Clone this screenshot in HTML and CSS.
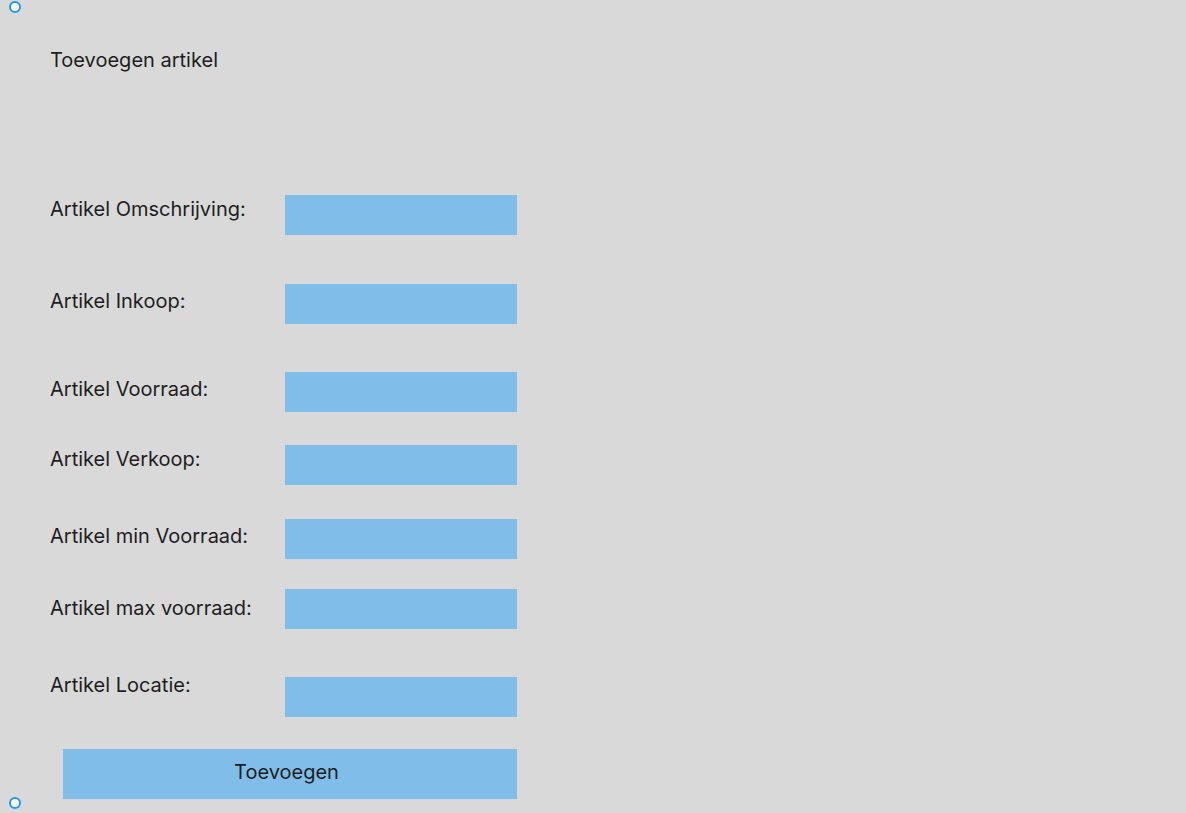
FILE: index.html
```html
<!DOCTYPE html>
<html lang="nl">
<head>
<meta charset="utf-8">
<title>Toevoegen artikel</title>
<link rel="stylesheet" href="styles.css">
</head>
<body>
<span class="handle handle-top"></span>
<span class="handle handle-bottom"></span>
<main class="page">
  <h1 class="title">Toevoegen artikel</h1>
  <form class="form">
    <div class="row r1"><label class="label">Artikel Omschrijving:</label><input class="field" type="text"></div>
    <div class="row r2"><label class="label">Artikel Inkoop:</label><input class="field" type="text"></div>
    <div class="row r3"><label class="label">Artikel Voorraad:</label><input class="field" type="text"></div>
    <div class="row r4"><label class="label">Artikel Verkoop:</label><input class="field" type="text"></div>
    <div class="row r5"><label class="label">Artikel min Voorraad:</label><input class="field" type="text"></div>
    <div class="row r6"><label class="label">Artikel max voorraad:</label><input class="field" type="text"></div>
    <div class="row r7"><label class="label">Artikel Locatie:</label><input class="field" type="text"></div>
    <button class="submit" type="button">Toevoegen</button>
  </form>
</main>
</body>
</html>
```

FILE: styles.css
```css
html, body {
  margin: 0;
  padding: 0;
  background: #d9d9d9;
  height: 100%;
  overflow: hidden;
}
body {
  font-family: Inter, "Liberation Sans", sans-serif;
  color: #1e1e1e;
  position: relative;
}
.page {
  padding: 48px 0 0 50px;
}
.title {
  margin: 0;
  font-size: 20px;
  font-weight: 400;
  line-height: 24px;
  height: 24px;
}
.form {
  display: flex;
  flex-direction: column;
  margin-top: 123px;
}
.row {
  display: flex;
  align-items: flex-start;
}
.label {
  width: 235px;
  font-size: 20px;
  line-height: 24px;
}
.field {
  width: 232px;
  height: 40px;
  box-sizing: border-box;
  border: none;
  background: #80bde9;
  margin: 0;
  padding: 0 8px;
  font: inherit;
}
.r1 .label { padding-top: 2px; }
.r2 { margin-top: 49px; }
.r2 .label { padding-top: 5px; }
.r3 { margin-top: 48px; }
.r3 .label { padding-top: 5px; }
.r4 { margin-top: 33px; }
.r4 .label { padding-top: 2px; }
.r5 { margin-top: 34px; }
.r5 .label { padding-top: 5px; }
.r6 { margin-top: 30px; }
.r6 .label { padding-top: 7px; }
.r7 { margin-top: 48px; }
.r7 .label { margin-top: -4px; }
.submit {
  margin: 32px 0 0 13px;
  width: 454px;
  height: 50px;
  border: none;
  background: #80bde9;
  font: inherit;
  font-size: 20px;
  color: #1e1e1e;
  padding: 0 7px 5px 0;
}
.handle {
  position: absolute;
  left: 9px;
  width: 8px;
  height: 8px;
  border: 2px solid #2196f3;
  border-radius: 50%;
  background: #fff;
}
.handle-top { top: 1px; }
.handle-bottom { top: 797px; }
```
